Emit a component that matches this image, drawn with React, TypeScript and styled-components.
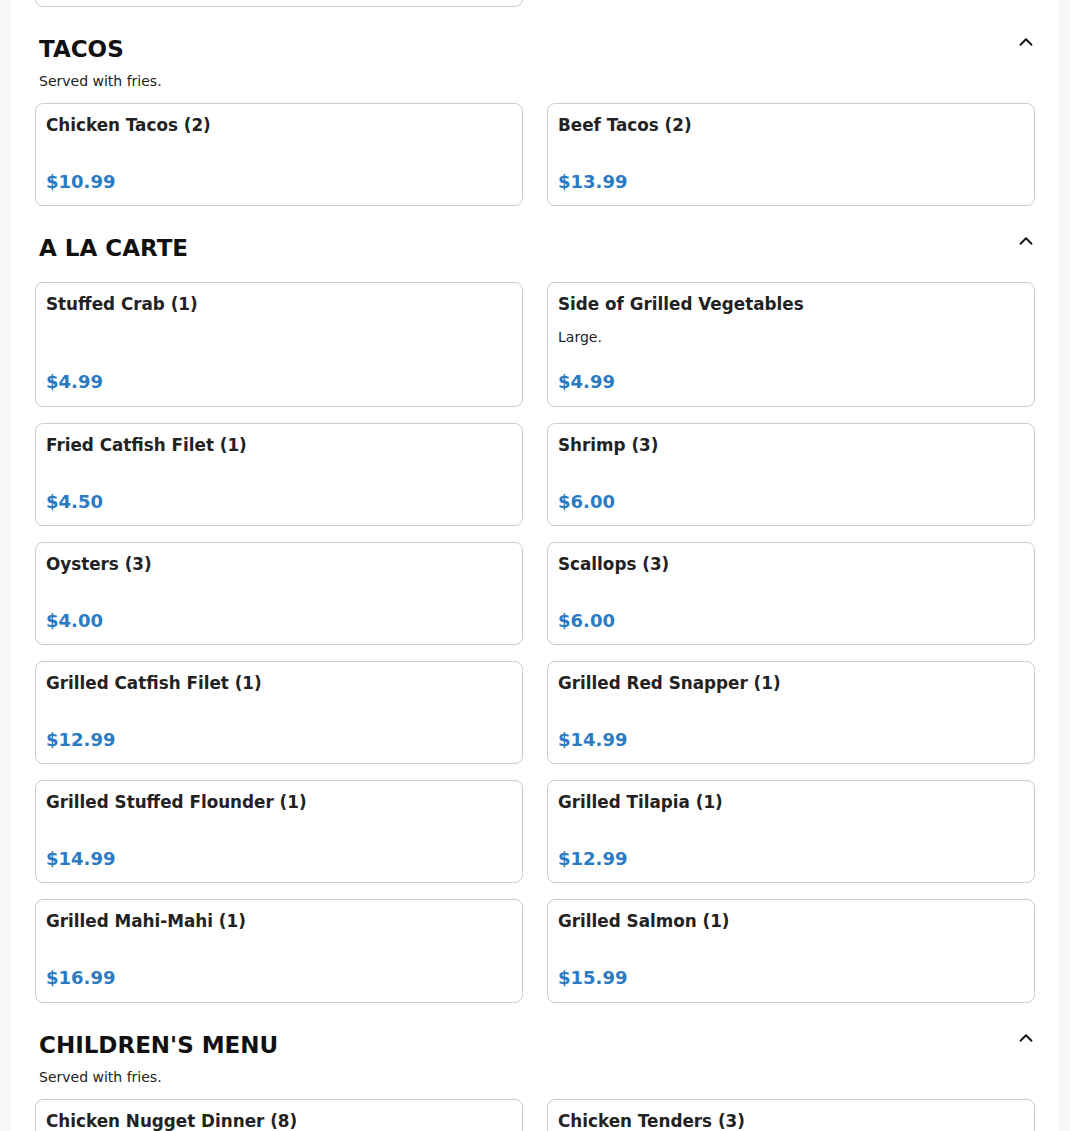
import React, { useState } from "react";
import styled, { createGlobalStyle } from "styled-components";
import { ChevronUp, ChevronDown } from "lucide-react";

const GlobalStyle = createGlobalStyle`
  body {
    margin: 0;
    background: #f8f8f8;
    font-family: "DejaVu Sans", "Liberation Sans", sans-serif;
    color: #222;
  }
`;

type Item = { name: string; price: string; description?: string };
type Section = { title: string; note?: string; items: Item[] };

const sections: Section[] = [
    {
        title: "TACOS",
        note: "Served with fries.",
        items: [
            { name: "Chicken Tacos (2)", price: "$10.99" },
            { name: "Beef Tacos (2)", price: "$13.99" },
        ],
    },
    {
        title: "A LA CARTE",
        items: [
            { name: "Stuffed Crab (1)", price: "$4.99" },
            { name: "Side of Grilled Vegetables", price: "$4.99", description: "Large." },
            { name: "Fried Catfish Filet (1)", price: "$4.50" },
            { name: "Shrimp (3)", price: "$6.00" },
            { name: "Oysters (3)", price: "$4.00" },
            { name: "Scallops (3)", price: "$6.00" },
            { name: "Grilled Catfish Filet (1)", price: "$12.99" },
            { name: "Grilled Red Snapper (1)", price: "$14.99" },
            { name: "Grilled Stuffed Flounder (1)", price: "$14.99" },
            { name: "Grilled Tilapia (1)", price: "$12.99" },
            { name: "Grilled Mahi-Mahi (1)", price: "$16.99" },
            { name: "Grilled Salmon (1)", price: "$15.99" },
        ],
    },
    {
        title: "CHILDREN'S MENU",
        note: "Served with fries.",
        items: [
            { name: "Chicken Nugget Dinner (8)", price: "$7.99" },
            { name: "Chicken Tenders (3)", price: "$7.99" },
            { name: "Fried Fish (1)", price: "$7.99" },
            { name: "Fried Shrimp (5)", price: "$7.99" },
        ],
    },
];

const Panel = styled.main`
  max-width: 1048px;
  margin: 0 auto;
  background: #fff;
  padding: 0 24px 24px;
  box-sizing: border-box;
`;

// the page is shown scrolled down: only the tail of the previous section shows
const PrevTail = styled.div`
  margin-top: -108px;
`;

const SectionBlock = styled.section`
  display: flex;
  flex-direction: column;
  padding-top: 24px;
`;

const Header = styled.div`
  display: flex;
  justify-content: space-between;
  align-items: flex-start;
  padding-left: 4px;
  margin-bottom: 8px;
`;

const Title = styled.h2`
  margin: 5px 0 0;
  font-size: 23px;
  line-height: 27px;
  font-weight: 700;
  color: #111;
`;

const Toggle = styled.button`
  width: 22px;
  height: 22px;
  margin-right: -2px;
  padding: 0;
  border: none;
  background: none;
  color: #111;
  display: flex;
  align-items: center;
  justify-content: center;
  cursor: pointer;
`;

const Note = styled.p`
  margin: 0;
  padding-left: 4px;
  font-size: 14px;
  line-height: 20px;
  color: #222;
`;

const Grid = styled.div`
  display: grid;
  grid-template-columns: 1fr 1fr;
  column-gap: 24px;
  row-gap: 16px;
  margin-top: 12px;
`;

const Card = styled.div`
  display: flex;
  flex-direction: column;
  border: 1px solid #ccc;
  border-radius: 8px;
  padding: 10px 10px 12.2px;
  background: #fff;
`;

const Name = styled.h3`
  margin: 0 0 12px;
  font-size: 16.8px;
  line-height: 22px;
  font-weight: 700;
  color: #222;
`;

const Desc = styled.p`
  margin: 0;
  font-size: 14px;
  line-height: 21px;
  color: #222;
`;

const Price = styled.div`
  margin-top: auto;
  padding-top: 23px;
  font-size: 18px;
  line-height: 22px;
  font-weight: 700;
  color: #2b7bc4;
`;

const MenuCard = ({ item }: { item: Item }) => (
    <Card>
        <Name>{item.name}</Name>
        {item.description && <Desc>{item.description}</Desc>}
        <Price>{item.price}</Price>
    </Card>
);

const MenuSection = ({ section }: { section: Section }) => {
    const [open, setOpen] = useState(true);
    return (
        <SectionBlock>
            <Header>
                <Title>{section.title}</Title>
                <Toggle onClick={() => setOpen(!open)} aria-label="Toggle section">
                    {open ? <ChevronUp size={22} strokeWidth={2} /> : <ChevronDown size={22} strokeWidth={2} />}
                </Toggle>
            </Header>
            {section.note && <Note>{section.note}</Note>}
            {open && (
                <Grid>
                    {section.items.map((item) => (
                        <MenuCard key={item.name} item={item} />
                    ))}
                </Grid>
            )}
        </SectionBlock>
    );
};

export default function App() {
    return (
        <>
            <GlobalStyle />
            <Panel>
                <PrevTail>
                    <Grid>
                        <MenuCard item={{ name: "Seafood Combo", price: "$18.99" }} />
                    </Grid>
                </PrevTail>
                {sections.map((s) => (
                    <MenuSection key={s.title} section={s} />
                ))}
            </Panel>
        </>
    );
}
